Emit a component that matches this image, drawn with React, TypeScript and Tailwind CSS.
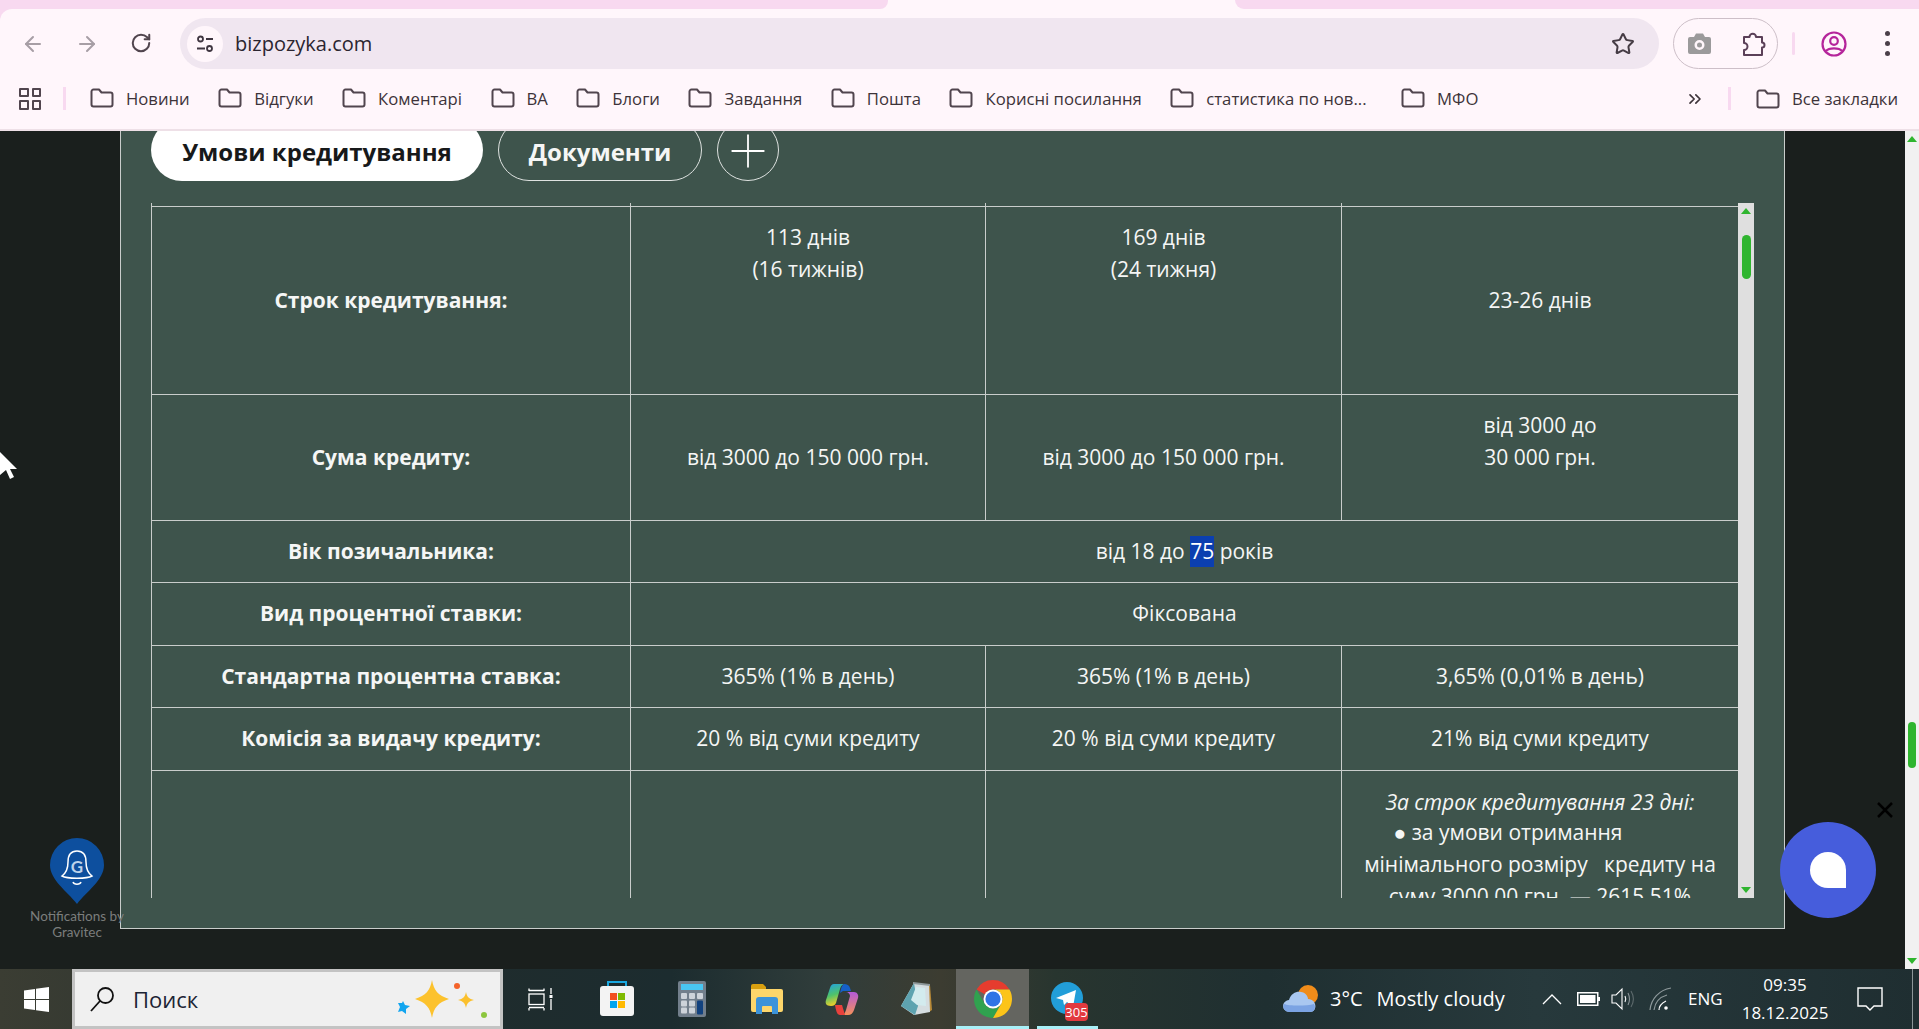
import { ArrowLeft, ArrowRight, RotateCw, Star, Plus, ChevronsRight } from "lucide-react";

const bookmarks = ["Новини", "Відгуки", "Коментарі", "ВА", "Блоги", "Завдання", "Пошта", "Корисні посилання", "статистика по нов...", "МФО"];

const FolderIcon = () => (
  <svg width="24" height="20" viewBox="0 0 24 20" fill="none" stroke="#51454e" strokeWidth="2" className="shrink-0">
    <path d="M1.5 3.5a2 2 0 0 1 2-2h5.5l2.5 3h9a2 2 0 0 1 2 2v10a2 2 0 0 1-2 2h-17a2 2 0 0 1-2-2z" strokeLinejoin="round" />
  </svg>
);

const ChromeLogo = () => (
  <svg width="38" height="38" viewBox="4 4 40 40">
    <path d="M24 4A20 20 0 0 1 41.32 14H24a10 10 0 0 0-8.66 5L6.68 14A20 20 0 0 1 24 4z" fill="#e53c2e" />
    <path d="M6.68 14A20 20 0 0 0 24 44L32.66 29a10 10 0 0 1-17.32 0z" fill="#30a24f" />
    <path d="M24 44A20 20 0 0 0 41.32 14H24a10 10 0 0 1 8.66 15z" fill="#fcc419" />
    <circle cx="24" cy="24" r="10" fill="#fff" />
    <circle cx="24" cy="24" r="8" fill="#2f74e6" />
  </svg>
);

const cellBase = "border-l border-[#c9cdcb] align-middle text-center";
const rowTop = "border-t border-[#c9cdcb]";

function Row({ label, cells, h }: { label: string; cells: string[]; h: string }) {
  return (
    <tr>
      <td className={`${cellBase} ${rowTop} ${h} font-bold`}>{label}</td>
      {cells.map((c, i) => (
        <td key={i} className={`${cellBase} ${rowTop}`}>{c}</td>
      ))}
    </tr>
  );
}

const ChromeBar = () => (
  <header className="bg-[#f8d9f0] font-['Open_Sans',sans-serif]">
    <div className="flex h-[9px] bg-[#fff6fb]">
      <div className="w-[888px] bg-[#f8d9f0] rounded-br-lg" />
      <div className="w-[347px]" />
      <div className="flex-1 bg-[#f8d9f0] rounded-bl-xl" />
    </div>
    <div className="bg-[#fff6fb] rounded-tl-xl">
      <div className="flex items-center h-[60px] pt-[9px] pl-[15px]">
        <div className="flex gap-[18px]">
          <div className="w-9 flex justify-center text-[#a79ea5]"><ArrowLeft size={24} strokeWidth={2} /></div>
          <div className="w-9 flex justify-center text-[#a79ea5]"><ArrowRight size={24} strokeWidth={2} /></div>
          <div className="w-9 flex justify-center text-[#51454e]"><RotateCw size={22} strokeWidth={2.2} /></div>
        </div>
        <div className="ml-[21px] w-[1479px] h-[51px] rounded-full bg-[#f0e6f0] flex items-center pl-[7px] pr-[24px]">
          <div className="w-9 h-9 rounded-full bg-[#fff6fb] flex items-center justify-center">
            <svg width="20" height="20" viewBox="0 0 20 20" fill="none" stroke="#3f3540" strokeWidth="1.8">
              <circle cx="5.5" cy="5" r="2.5" />
              <path d="M11 5h7M2 14.5h8" />
              <circle cx="14.5" cy="14.5" r="2.5" />
            </svg>
          </div>
          <span className="ml-[12px] text-[20px] text-[#2b2530]">bizpozyka.com</span>
          <Star size={24} strokeWidth={2} className="ml-auto text-[#463c45]" />
        </div>
        <div className="ml-[14px] w-[105px] h-[51px] rounded-full border border-[#cdbfc8] flex items-center justify-between pl-[14px] pr-[11px]">
          <svg width="23" height="21" viewBox="0 0 23 21" fill="#9b9a9b">
            <path fillRule="evenodd" d="M2 4h4l2-3.500h7l2 3.500h4a2 2 0 0 1 2 2v13a2 2 0 0 1-2 2h-19a2 2 0 0 1-2-2v-13a2 2 0 0 1 2-2zM11.500 7a5 5 0 1 0 0 10 5 5 0 0 0 0-10zm0 2.500a2.500 2.500 0 1 1 0 5 2.500 2.500 0 0 1 0-5z" />
          </svg>
          <svg width="25" height="26" viewBox="0 0 25 26" fill="none" stroke="#5b4058" strokeWidth="2" strokeLinejoin="round">
            <path d="M3 6h5.500a3.200 3.200 0 0 1 6.500 0h6v5.500a2.500 2.500 0 0 1 0 5V24H3v-5a3.500 3.500 0 0 0 0-7z" />
          </svg>
        </div>
        <div className="ml-[14px] w-[3px] h-[23px] bg-[#f8d9f0] rounded-full" />
        <div className="ml-[21px] w-9 flex justify-center">
          <svg width="26" height="26" viewBox="0 0 26 26" fill="none" stroke="#b5259b" strokeWidth="2.200">
            <circle cx="13" cy="13" r="11.500" />
            <circle cx="13" cy="10" r="3.800" />
            <path d="M5 20c3-3.500 13-3.500 16 0" />
          </svg>
        </div>
        <div className="ml-[17px] w-9 flex flex-col items-center gap-[5px]">
          <span className="w-[5px] h-[5px] rounded-full bg-[#4b3f49]" />
          <span className="w-[5px] h-[5px] rounded-full bg-[#4b3f49]" />
          <span className="w-[5px] h-[5px] rounded-full bg-[#4b3f49]" />
        </div>
      </div>
      <div className="flex items-center h-[62px] pb-[1px] border-b-2 border-[#eee0e7] text-[16.7px] text-[#3d3339] whitespace-nowrap">
        <div className="ml-[19px] grid grid-cols-2 gap-[3px]">
          {[0, 1, 2, 3].map((i) => (
            <span key={i} className="w-[9.500px] h-[9.500px] border-2 border-[#51454e] rounded-[1px]" />
          ))}
        </div>
        <div className="ml-[22px] mr-[24px] w-[3px] h-[23px] bg-[#f8d9f0]" />
        <div className="flex gap-[28.5px] w-[1595px]">
          {bookmarks.map((b) => (
            <div key={b} className="flex items-center gap-[12px] last:ml-[6px]">
              <FolderIcon />
              <span>{b}</span>
            </div>
          ))}
        </div>
        <ChevronsRight size={20} strokeWidth={2} className="text-[#3d3339]" />
        <div className="ml-[23px] mr-[25px] w-[3px] h-[23px] bg-[#f8d9f0]" />
        <FolderIcon />
        <span className="ml-[12px]">Все закладки</span>
      </div>
    </div>
  </header>
);

const CreditTable = () => (
  <table className="table-fixed border-separate border-spacing-0 w-[1587px] text-[21px] leading-[31.5px] text-[#f5f6f5]">
    <colgroup>
      <col className="w-[479px]" />
      <col className="w-[355px]" />
      <col className="w-[356px]" />
      <col className="w-[397px]" />
    </colgroup>
    <tbody>
      <tr className="h-[3px]">
        <td className="border-l border-[#c9cdcb] h-[3px] p-0" />
        <td className="border-l border-[#c9cdcb] h-[3px] p-0" />
        <td className="border-l border-[#c9cdcb] h-[3px] p-0" />
        <td className="border-l border-[#c9cdcb] h-[3px] p-0" />
      </tr>
      <tr>
        <td className={`${cellBase} ${rowTop} h-[188px] font-bold`}>Строк кредитування:</td>
        <td className={`${cellBase} ${rowTop} !align-top pt-[15px]`}>113 днів<br />(16 тижнів)</td>
        <td className={`${cellBase} ${rowTop} !align-top pt-[15px]`}>169 днів<br />(24 тижня)</td>
        <td className={`${cellBase} ${rowTop}`}>23-26 днів</td>
      </tr>
      <tr>
        <td className={`${cellBase} ${rowTop} h-[126px] font-bold`}>Сума кредиту:</td>
        <td className={`${cellBase} ${rowTop}`}>від 3000 до 150 000 грн.</td>
        <td className={`${cellBase} ${rowTop}`}>від 3000 до 150 000 грн.</td>
        <td className={`${cellBase} ${rowTop} pb-[32px]`}>від 3000 до<br />30 000 грн.</td>
      </tr>
      <tr>
        <td className={`${cellBase} ${rowTop} h-[62px] font-bold`}>Вік позичальника:</td>
        <td colSpan={3} className={`${cellBase} ${rowTop}`}>
          від 18 до <span className="inline-block bg-[#0b3fb0] text-white">75</span> років
        </td>
      </tr>
      <tr>
        <td className={`${cellBase} ${rowTop} h-[63px] font-bold`}>Вид процентної ставки:</td>
        <td colSpan={3} className={`${cellBase} ${rowTop}`}>Фіксована</td>
      </tr>
      <Row label="Стандартна процентна ставка:" h="h-[62px]" cells={["365% (1% в день)", "365% (1% в день)", "3,65% (0,01% в день)"]} />
      <Row label="Комісія за видачу кредиту:" h="h-[63px]" cells={["20 % від суми кредиту", "20 % від суми кредиту", "21% від суми кредиту"]} />
      <tr>
        <td className={`${cellBase} ${rowTop} h-[300px]`} />
        <td className={`${cellBase} ${rowTop}`} />
        <td className={`${cellBase} ${rowTop}`} />
        <td className={`${cellBase} ${rowTop} !align-top pt-[16px]`}>
          <div className="italic">За строк кредитування 23 дні:</div>
          <div className="pr-[64px] h-[31.5px] -mt-[2px]">● за умови отримання</div>
          <div className="mt-[1px]">мінімального розміру&nbsp;&nbsp; кредиту на</div>
          <div>суму 3000,00 грн. — 2615,51%</div>
        </td>
      </tr>
    </tbody>
  </table>
);

const Taskbar = () => (
  <footer className="h-[60px] flex items-stretch text-white font-['Open_Sans',sans-serif] bg-[linear-gradient(90deg,#3b3d33_0%,#1f2c2d_25%,#1c2c2f_35%,#303d3b_43%,#3c3c31_49%,#28352f_55%,#1f2f31_66%,#27393c_80%,#1f2e31_100%)] [&>*]:shrink-0">
    <div className="w-[72px] flex items-center justify-center">
      <svg width="25" height="25" viewBox="0 0 25 25" fill="#fff">
        <path d="M0 3.500 11 2v10H0zM12 1.800 25 0v12H12zM0 13h11v10L0 21.500zM12 13h13v12l-13-1.800z" />
      </svg>
    </div>
    <div className="w-[431px] bg-[#f0f0f0] border-[3px] border-[#c3c3c3] flex items-center text-[#1c2434]">
      <svg width="25" height="27" viewBox="0 0 25 27" fill="none" stroke="#111" strokeWidth="1.800" className="ml-[15px]">
        <circle cx="15.500" cy="9.500" r="7.500" />
        <path d="M10 15 1 25" />
      </svg>
      <span className="ml-[18px] text-[22px]">Поиск</span>
      <svg width="100" height="50" viewBox="0 0 100 50" className="ml-auto mr-[5px]">
        <path d="M37 6c2 11 6 15 17 19-11 4-15 8-17 19-2-11-6-15-17-19 11-4 15-8 17-19z" fill="#fcc22d" />
        <path d="M71 18c1 5 3 7 8 8-5 1-7 3-8 8-1-5-3-7-8-8 5-1 7-3 8-8z" fill="#fbc02d" />
        <path d="M8 27l2 4 5 1-4 3-0 5-4-3-4 1 2-5-2-4 4 0z" fill="#12a5ef" />
        <circle cx="62" cy="12" r="3" fill="#f4632a" />
        <circle cx="89" cy="41" r="3" fill="#8cc63e" />
      </svg>
    </div>
    <div className="flex [&>*]:shrink-0">
      <div className="w-[75px] flex items-center justify-center">
        <svg width="26" height="24" viewBox="0 0 26 24" fill="none" stroke="#fff" strokeWidth="1.300">
          <path d="M1 4V1.500M1 3.500h15M16 4V1.500M1 21v2.500M1 20.500h15M16 21v2.500" />
          <rect x="1" y="7" width="15" height="10.500" />
          <path d="M23 1v6M23 12v11" />
          <rect x="21.500" y="8" width="3" height="3" fill="#fff" stroke="none" />
        </svg>
      </div>
      <div className="w-[75px] pl-[3px] flex items-center justify-center">
        <svg width="36" height="36" viewBox="0 0 36 36">
          <path d="M9 6V1h18v5" fill="none" stroke="#1ba8e0" strokeWidth="2" />
          <rect x="1" y="5" width="34" height="30" rx="3" fill="#f3f3f3" />
          <rect x="11" y="12" width="7" height="7" fill="#f25022" />
          <rect x="19" y="12" width="7" height="7" fill="#7fba00" />
          <rect x="11" y="20" width="7" height="7" fill="#00a4ef" />
          <rect x="19" y="20" width="7" height="7" fill="#ffb900" />
        </svg>
      </div>
      <div className="w-[75px] pl-[3px] flex items-center justify-center">
        <svg width="28" height="36" viewBox="0 0 28 36">
          <rect width="28" height="36" rx="2" fill="#727f8c" />
          <rect x="3" y="3" width="22" height="6" fill="#49c6f2" />
          {[12, 19.500, 26.500].map((y) => [3, 11].map((x) => <rect key={`${x}${y}`} x={x} y={y} width="6" height="6" rx="1" fill="#cdd3da" />))}
          <rect x="19" y="12" width="6" height="6" rx="1" fill="#cdd3da" />
          <rect x="19" y="19.500" width="6" height="14" rx="1" fill="#12427f" />
        </svg>
      </div>
      <div className="w-[75px] pl-[3px] flex items-center justify-center">
        <svg width="32" height="30" viewBox="0 0 32 30">
          <path d="M0 2a2 2 0 0 1 2-2h10l3 3v5H0z" fill="#d9a00f" />
          <path d="M0 5h30a2 2 0 0 1 2 2v19a2 2 0 0 1-2 2H2a2 2 0 0 1-2-2z" fill="#fdd66b" />
          <path d="M5 30V16a3 3 0 0 1 3-3h16a3 3 0 0 1 3 3v14h-6v-7a1 1 0 0 0-1-1h-8a1 1 0 0 0-1 1v7z" fill="#3c93d9" />
        </svg>
      </div>
      <div className="w-[75px] pl-[3px] flex items-center justify-center">
        <svg width="34" height="32" viewBox="0 0 34 32">
          <defs>
            <linearGradient id="cp1" x1="0" y1="0" x2="0.300" y2="1">
              <stop offset="0" stopColor="#1f9fe8" />
              <stop offset="0.550" stopColor="#4fc26a" />
              <stop offset="1" stopColor="#f3d028" />
            </linearGradient>
            <linearGradient id="cp2" x1="0.500" y1="0" x2="0.500" y2="1">
              <stop offset="0" stopColor="#b45ad8" />
              <stop offset="1" stopColor="#f5905a" />
            </linearGradient>
          </defs>
          <path d="M9 1h12c-4 0-5 2-6 5l-4 14c-1 2-2 3-5 3C1 23 0 20 1 17L5 5c1-3 2-4 4-4z" fill="url(#cp1)" />
          <path d="M19 1c3 0 5 1 6 4l1 3h-8l-3 2c1-5 2-8 4-9z" fill="#1560c8" />
          <path d="M21 9h8c3 0 5 3 4 6l-4 12c-1 3-3 5-6 5h-8c4 0 5-2 6-5l4-14c0-2-2-4-4-4z" fill="url(#cp2)" />
          <path d="M10 22h7l3 10h-5c-3 0-4-4-5-10z" fill="#e8413c" />
        </svg>
      </div>
      <div className="w-[75px] flex items-center justify-center">
        <svg width="32" height="34" viewBox="0 0 32 34">
          <path d="M14 1 30 3l2 25-3 2z" fill="#b98a38" />
          <path d="M14 1 29 3l1 27-16 3L1 24z" fill="#d5dde0" />
          <path d="M14 1 1 24l14 9 3-9z" fill="#5ea3b0" />
          <path d="M16 5l9 1 1 18-9-1-6-5z" fill="#d3ebee" />
          <path d="M13 0l17 2v2L13 2z" fill="#8e989a" />
        </svg>
      </div>
      <div className="ml-[3px] w-[73px] pt-[2px] flex items-center justify-center bg-[#646560] border-b-[3px] border-[#a9f0f8]">
        <ChromeLogo />
      </div>
      <div className="ml-[8px] w-[61px] relative flex items-center border-b-[3px] border-[#a9f0f8]">
        <svg width="32" height="32" viewBox="0 0 32 32" className="ml-[14px]">
          <circle cx="16" cy="16" r="16" fill="#229ed9" />
          <path d="M5 16 25 8l-3 17-6-5-3 3-1-5z" fill="#fff" />
        </svg>
        <span className="absolute left-[28px] top-[34px] w-[23px] h-[18px] rounded-[4px] bg-[#e23a3f] text-[13px] leading-[18px] text-center">305</span>
      </div>
    </div>
    <div className="ml-[184px] flex items-center w-[36px]">
      <svg width="36" height="30" viewBox="0 0 36 30">
        <circle cx="26" cy="11" r="10" fill="#f08c1a" />
        <path d="M8 28c-9 0-9-11-1-12 2-7 8-9 12-8 4 0 7 4 7 7 9 0 10 13 2 13z" fill="#a9c7f0" />
        <path d="M8 28c-6 0-8-5-6-8 5 2 23 2 30 0 2 3 1 8-4 8z" fill="#7ba3e3" />
      </svg>
    </div>
    <div className="flex items-center ml-[12px] w-[175px] text-[20px] whitespace-nowrap">
      <span>3°C</span>
      <span className="ml-[14px]">Mostly cloudy</span>
    </div>
    <div className="flex items-center [&>*]:shrink-0">
      <svg width="20" height="12" viewBox="0 0 20 12" fill="none" stroke="#fff" strokeWidth="1.300" className="ml-[37px]">
        <path d="M1 11 10 2l9 9" />
      </svg>
      <svg width="23" height="14" viewBox="0 0 23 14" className="ml-[15px]">
        <rect x="0.750" y="0.750" width="20" height="12.500" fill="none" stroke="#fff" strokeWidth="1.500" />
        <rect x="3" y="3" width="15.500" height="8" fill="#fff" />
        <rect x="21" y="5" width="2" height="4" fill="#fff" />
      </svg>
      <svg width="24" height="24" viewBox="0 0 24 24" fill="none" stroke="#fff" strokeWidth="1.100" className="ml-[11px]">
        <path d="M1 8h4l6-6v20l-6-6H1z" />
        <path d="M14 9c1 2 1 4 0 6" />
        <path d="M17 6c2 4 2 8 0 12" stroke="#8b9598" />
        <path d="M20 4c3 5 3 11 0 16" stroke="#5f6b6e" />
      </svg>
      <svg width="24" height="24" viewBox="0 0 24 24" fill="none" stroke="#8f9a9c" strokeWidth="1.200" className="ml-[14px]">
        <path d="M1 23C2 12 10 3 22 1" />
        <path d="M5 23c1-8 6-13 13-15" />
        <path d="M10 23c0-4 3-7 7-9" stroke="#fff" />
        <circle cx="17" cy="21" r="1.800" fill="#fff" stroke="none" />
      </svg>
      <span className="ml-[15px] text-[17px] w-[34px]">ENG</span>
    </div>
    <div className="ml-[20px] w-[86px] flex flex-col items-center justify-center text-[17px] leading-[28px] whitespace-nowrap">
      <span>09:35</span>
      <span>18.12.2025</span>
    </div>
    <div className="ml-[29px] flex items-center">
      <svg width="26" height="24" viewBox="0 0 26 24" fill="none" stroke="#fff" strokeWidth="1.400">
        <path d="M1 1h24v18H17l-4 4-4-4H1z" />
      </svg>
    </div>
    <div className="ml-auto w-[1px] bg-[#8c9698] mr-[6px]" />
  </footer>
);

const App = () => {
  return (
    <div className="h-[1029px] w-[1919px] overflow-hidden flex flex-col bg-[#1a1f1d]">
      <ChromeBar />
      <main className="relative flex-1 flex overflow-hidden font-['Open_Sans',sans-serif]">
        <div className="ml-[120px] w-[1665px] h-[798px] bg-[#3e544c] border-x border-b border-[#c9cdcb] pl-[30px] overflow-hidden">
          <div className="flex items-center gap-[15px] -mt-[12px] text-[24px] font-bold">
            <div className="h-[62px] w-[332px] pt-[4px] rounded-full bg-white text-[#17191a] flex items-center justify-center">Умови кредитування</div>
            <div className="h-[62px] w-[204px] pt-[4px] rounded-full border border-[#dfe3e1] text-[#f5f6f5] flex items-center justify-center">Документи</div>
            <div className="h-[62px] w-[62px] pt-[2px] rounded-full border border-[#dfe3e1] text-white flex items-center justify-center">
              <Plus size={54} strokeWidth={0.8} />
            </div>
          </div>
          <div className="flex mt-[22px] h-[695px] w-[1603px]">
            <div className="w-[1587px] overflow-hidden">
              <CreditTable />
            </div>
            <div className="w-[16px] bg-[#dfdfdf] flex flex-col items-center py-[5px]">
              <span className="w-0 h-0 border-x-[5px] border-x-transparent border-b-[6px] border-b-[#2fb52f]" />
              <span className="mt-[21px] w-[9px] h-[44px] rounded-full bg-[#2fb52f]" />
              <span className="mt-auto w-0 h-0 border-x-[5px] border-x-transparent border-t-[6px] border-t-[#2fb52f]" />
            </div>
          </div>
        </div>
        <div className="absolute right-0 top-0 bottom-0 w-[14px] bg-[#f1f1f1] flex flex-col items-center py-[5px]">
          <span className="w-0 h-0 border-x-[5px] border-x-transparent border-b-[6px] border-b-[#2fb52f]" />
          <span className="mt-[580px] w-[8px] h-[46px] rounded-full bg-[#2fb52f]" />
          <span className="mt-auto w-0 h-0 border-x-[5px] border-x-transparent border-t-[6px] border-t-[#2fb52f]" />
        </div>
        <div className="absolute left-[29px] top-[707px] w-[96px] flex flex-col items-center font-['Lato',sans-serif] text-[13.5px] leading-[16px] text-[#7b7d7c] text-center whitespace-nowrap">
          <svg width="54" height="66" viewBox="0 0 54 66">
            <path d="M27 66C17 53 0 42 0 27a27 27 0 0 1 54 0c0 15-17 26-27 39z" fill="#0d4f9e" />
            <path d="M27 13c-7 0-9 5-9 11 0 7-2 11-6 14 5 3 25 3 30 0-4-3-6-7-6-14 0-6-2-11-9-11z" fill="none" stroke="#fff" strokeWidth="1.500" />
            <path d="M23 44c1 3 7 3 8 0" fill="none" stroke="#fff" strokeWidth="1.500" />
            <text x="27" y="35" textAnchor="middle" fontSize="17" fontWeight="700" fill="#bcd2ea" fontFamily="Lato, sans-serif">G</text>
          </svg>
          <span className="mt-[4px]">Notifications by</span>
          <span>Gravitec</span>
        </div>
        <svg width="18" height="27" viewBox="0 0 18 27" className="absolute left-0 top-[321px]">
          <path d="M0 0l17 17h-7l4 8-4 2-4-9-6 5z" fill="#fff" />
        </svg>
        <div className="absolute left-[1780px] top-[691px] w-[96px] h-[96px] rounded-full bg-[#465ddc] flex items-center justify-center">
          <div className="w-[36px] h-[36px] bg-white rounded-full rounded-br-none" />
        </div>
        <svg width="16" height="16" viewBox="0 0 16 16" stroke="#000" strokeWidth="2.500" className="absolute left-[1877px] top-[671px]">
          <path d="M1 1l14 14M15 1 1 15" />
        </svg>
      </main>
      <Taskbar />
    </div>
  );
};

export default App;
